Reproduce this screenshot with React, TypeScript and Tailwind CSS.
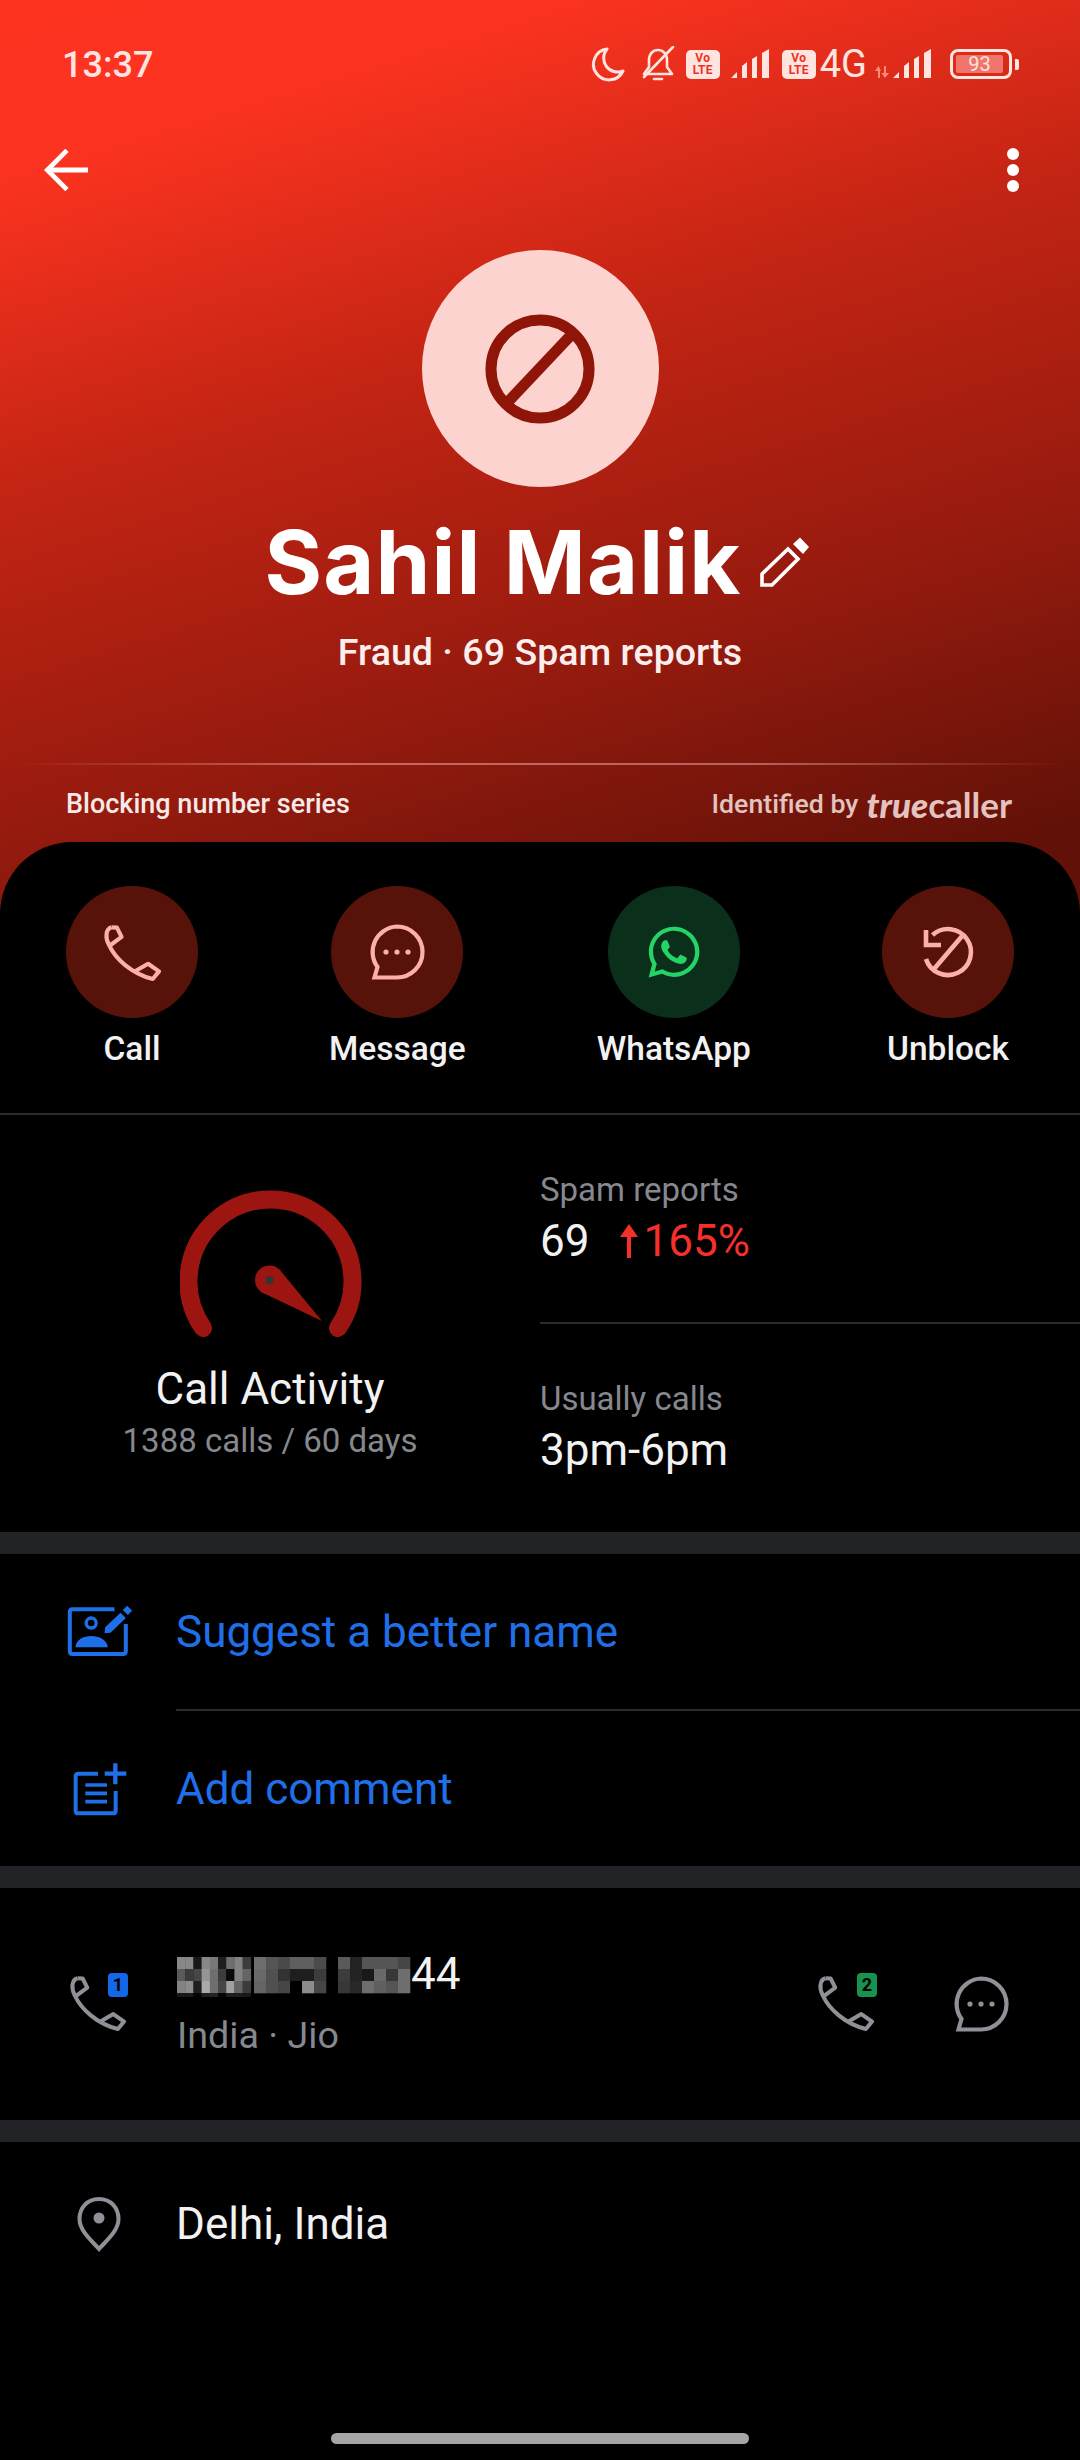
import { FaWhatsapp } from "react-icons/fa";

function PhoneIcon({ className, size = 59 }: { className: string; size?: number }) {
    return (
        <svg viewBox="66 66 178 178" width={size} height={size} fill="none" stroke="currentColor" strokeWidth="12.5" strokeLinejoin="round" className={className}>
            <path d="M92 79L108 80L122 108L88 133" />
            <path d="M92 79C74 84 72 110 84 132C102 172 150 218 216 235L235 212L202 189L160 213" />
        </svg>
    );
}

function ChatIcon({ className, size = 64 }: { className: string; size?: number }) {
    return (
        <svg viewBox="0 0 64 64" width={size} height={size} fill="none" stroke="currentColor" strokeWidth="4.2" className={className}>
            <path d="M32 6.5A25.5 25.5 0 0 1 32 57.5H9.5L12.5 47A25.5 25.5 0 0 1 32 6.5Z" />
            <circle cx="21" cy="32" r="2.6" fill="currentColor" stroke="none" />
            <circle cx="32" cy="32" r="2.6" fill="currentColor" stroke="none" />
            <circle cx="43" cy="32" r="2.6" fill="currentColor" stroke="none" />
        </svg>
    );
}

function UnblockIcon() {
    return (
        <svg viewBox="-30 -30 60 60" width="60" height="60" fill="none" stroke="#fdb0a8" strokeWidth="4.6">
            <path d="M-15.5 -17A23 23 0 1 1 -22 7" />
            <path d="M-22 -22V-7H-7" />
            <path d="M15 -17L-14 17" />
        </svg>
    );
}

function SignalBars() {
    return (
        <svg viewBox="0 0 40 30" width="40" height="30" fill="#ffe4e0">
            <path d="M0 29L6 23V29Z M11 17L16 13V29H11Z M21 10L26 7V29H21Z M31 4L38 0V29H31Z" />
        </svg>
    );
}

function VoLte() {
    return (
        <div className="w-[34px] h-[29px] rounded-[5px] bg-[#ffe4e0] flex flex-col items-center justify-center text-[#f0301f] font-bold text-[12px] leading-[12px] tracking-[0.3px]">
            <span>Vo</span>
            <span>LTE</span>
        </div>
    );
}

const block1 = [
    [136, 136, 24, 136, 120, 30, 110, 130, 60],
    [90, 60, 70, 150, 110, 60, 10, 130, 100],
    [130, 140, 30, 170, 110, 70, 160, 100, 60],
    [24, 24, 5, 30, 35, 5, 30, 30, 24],
];
const block2 = [
    [110, 85, 75, 95, 95, 75],
    [105, 80, 50, 30, 30, 60],
    [100, 80, 70, 0, 140, 70],
];
const block3 = [
    [90, 35, 85, 85, 85, 70],
    [60, 35, 25, 105, 55, 110],
    [55, 40, 110, 95, 85, 110],
];

function Mosaic() {
    const drawBlock = (rows: number[][], x: number, w: number) =>
        rows.flatMap((row, r) =>
            row.map((v, c) => (
                <rect key={`${x}-${r}-${c}`} x={x + c * w} y={r * 12} width={w + 0.3} height={12.3} fill={`rgb(${v},${v},${v})`} />
            ))
        );
    return (
        <svg width="234" height="40" viewBox="0 0 234 40" className="shrink-0 mt-[5px]">
            {drawBlock(block1, 0, 8.2)}
            {drawBlock(block2, 77, 12)}
            {drawBlock(block3, 161, 12)}
        </svg>
    );
}

function ActionButton({ label, bg, children }: { label: string; bg: string; children: React.ReactNode }) {
    return (
        <div className="flex flex-col items-center">
            <div className={`w-[132px] h-[132px] rounded-full flex items-center justify-center ${bg}`}>{children}</div>
            <span className="mt-[13px] text-[33.5px] leading-[36px] font-medium text-[#f2f2f2]">{label}</span>
        </div>
    );
}

export default function App() {
    return (
        <div className="w-[1080px] h-[2460px] bg-black font-['Roboto',sans-serif] overflow-hidden">
            {/* Red header */}
            <div className="h-[930px] bg-[linear-gradient(163deg,#fd3320_0%,#fb3320_14%,#c22413_40%,#931a0e_68%,#611108_92%)] text-white">
                {/* Status bar */}
                <div className="h-[128px] pl-[62px] pr-[61px] pt-[46px] flex justify-between items-start">
                    <span className="text-[36px] leading-[36px] font-medium text-[#ffe4e0] mt-[1px]">13:37</span>
                    <div className="flex items-center h-[36px] text-[#ffe4e0]">
                        <svg viewBox="0 0 34 35" width="34" height="35" fill="none" stroke="currentColor" strokeWidth="3" strokeLinejoin="round">
                            <path d="M16 2A15.5 15.5 0 1 0 32 24A14 14 0 0 1 16 2Z" />
                        </svg>
                        <svg viewBox="0 0 34 36" width="34" height="36" fill="none" stroke="currentColor" strokeWidth="2.6" strokeLinecap="round" strokeLinejoin="round" className="ml-[16px]">
                            <path d="M8 21V14C8 8 12 4 17 4C22 4 26 8 26 14V21L31 28H3Z" />
                            <path d="M32 1L3 31" />
                            <path d="M13 33H21" />
                        </svg>
                        <div className="ml-[11px]"><VoLte /></div>
                        <div className="ml-[11px]"><SignalBars /></div>
                        <div className="ml-[11px]"><VoLte /></div>
                        <span className="ml-[4px] text-[38px] leading-[36px] font-normal">4G</span>
                        <svg viewBox="0 0 14 12" width="14" height="12" fill="#ff8a7c" className="ml-[8px] mt-[16px]">
                            <path d="M3 12V5H0L3.5 0L6 5H5V12Z M9 0V7H6.5L10 12L14 7H11V0Z" />
                        </svg>
                        <div className="ml-[4px]"><SignalBars /></div>
                        <div className="ml-[17px] w-[62px] h-[30px] rounded-[8px] border-[3px] border-[#ffe4e0] p-[3px] flex">
                            <div className="w-[47px] bg-[#f0766b] rounded-[2px] flex items-center justify-center text-[20px] leading-none">93</div>
                        </div>
                        <div className="ml-[3px] w-[4px] h-[11px] rounded-r-[2px] bg-[#ffe4e0]" />
                    </div>
                </div>

                {/* Toolbar */}
                <div className="h-[104px] pt-[20px] pl-[44px] pr-[61px] flex justify-between items-start">
                    <svg viewBox="0 0 46 44" width="44" height="44" fill="none" stroke="white" strokeWidth="5">
                        <path d="M46 22H4" />
                        <path d="M24 1.5L3.5 22L24 42.5" />
                    </svg>
                    <div className="flex flex-col gap-[4px]">
                        <div className="w-[12px] h-[12px] rounded-full bg-white" />
                        <div className="w-[12px] h-[12px] rounded-full bg-white" />
                        <div className="w-[12px] h-[12px] rounded-full bg-white" />
                    </div>
                </div>

                {/* Avatar */}
                <div className="flex justify-center pt-[18px]">
                    <div className="w-[237px] h-[237px] rounded-full bg-[#fcd3ce] flex items-center justify-center">
                        <svg viewBox="0 0 110 110" width="110" height="110" fill="none" stroke="#8e1508" strokeWidth="11" className="blur-[0.5px]">
                            <circle cx="55" cy="55" r="49" />
                            <path d="M88 19L21 90" />
                        </svg>
                    </div>
                </div>

                {/* Name */}
                <div className="mt-[37px] pr-[6px] flex justify-center items-center h-[76px]">
                    <span className="font-['Inter',sans-serif] font-bold text-[88px] leading-[76px] tracking-[1.2px] text-white">Sahil Malik</span>
                    <svg viewBox="0 0 50 50" width="50" height="50" fill="none" stroke="white" strokeWidth="3.6" className="ml-[18px]">
                        <path d="M2 37L28 12L38 22L12 48H2Z" />
                        <path d="M33 7L40 0.5L49 10L43 17Z" fill="white" stroke="none" />
                    </svg>
                </div>
                <div className="mt-[32px] text-center text-[37.6px] leading-[40px] font-medium text-[#fbeeec]">Fraud · 69 Spam reports</div>

                {/* Source line */}
                <div className="mt-[91px] h-[2px] mx-[16px] bg-[linear-gradient(90deg,transparent,#c76a60_30%,#b5655d_70%,transparent)]" />
                <div className="mt-[21px] pl-[66px] pr-[68px] flex justify-between items-center h-[36px]">
                    <span className="text-[27px] leading-[32px] font-medium text-[#f6e9e7]">Blocking number series</span>
                    <span className="flex items-center text-[26.7px] leading-[32px] font-medium text-[#e3c3bf]">
                        Identified by
                        <span className="ml-[8px] font-['Lato',sans-serif] font-black italic text-[35px]">true</span>
                        <span className="font-['Lato',sans-serif] font-bold text-[35px]">caller</span>
                    </span>
                </div>
            </div>

            {/* Sheet */}
            <div className="-mt-[88px] relative bg-black rounded-t-[72px]">
                {/* Actions */}
                <div className="h-[273px] pt-[44px] px-[66px] flex justify-between border-b-2 border-[#2a2b2e]">
                    <ActionButton label="Call" bg="bg-[#57120a]">
                        <PhoneIcon className="text-[#fdb0a8]" />
                    </ActionButton>
                    <ActionButton label="Message" bg="bg-[#57120a]">
                        <ChatIcon className="text-[#fdb0a8]" />
                    </ActionButton>
                    <ActionButton label="WhatsApp" bg="bg-[#0a301c]">
                        <FaWhatsapp size={58} className="text-[#25d366]" />
                    </ActionButton>
                    <ActionButton label="Unblock" bg="bg-[#57120a]">
                        <UnblockIcon />
                    </ActionButton>
                </div>

                {/* Call activity + stats */}
                <div className="h-[417px] flex">
                    <div className="w-[540px] pt-[72px] flex flex-col items-center">
                        <svg viewBox="0 0 182 150" width="182" height="150" fill="none" className="ml-[1px]">
                            <path d="M23 141A82 82 0 1 1 158 141" stroke="#9d1510" strokeWidth="18" strokeLinecap="round" />
                            <circle cx="89.5" cy="93" r="14.5" fill="#9d1510" />
                            <path d="M99 82L142 134L81 105Z" fill="#9d1510" />
                            <circle cx="89.5" cy="93" r="4" fill="#333" />
                        </svg>
                        <span className="mt-[28px] text-[44px] leading-[48px] text-[#f2f2f2]">Call Activity</span>
                        <span className="mt-[10px] text-[33px] leading-[36px] text-[#85888e]">1388 calls / 60 days</span>
                    </div>
                    <div className="flex-1">
                        <div className="h-[209px] pt-[57px] border-b-2 border-[#2a2b2e]">
                            <div className="text-[33px] leading-[36px] text-[#85888e]">Spam reports</div>
                            <div className="mt-[9px] flex items-center text-[44px] leading-[48px] text-[#f2f2f2]">
                                69
                                <svg viewBox="0 0 18 34" width="18" height="34" fill="#f5302a" className="ml-[31px] mr-[5px]">
                                    <path d="M9 0L18 13H11V34H7V13H0Z" />
                                </svg>
                                <span className="text-[#f5302a]">165%</span>
                            </div>
                        </div>
                        <div className="pt-[57px]">
                            <div className="text-[33px] leading-[36px] text-[#85888e]">Usually calls</div>
                            <div className="mt-[9px] text-[44px] leading-[48px] text-[#f2f2f2]">3pm-6pm</div>
                        </div>
                    </div>
                </div>

                <div className="h-[22px] bg-[#222327]" />

                {/* Suggest / comment */}
                <div className="h-[155px] flex items-center">
                    <div className="w-[176px] pl-[66px] shrink-0">
                        <svg viewBox="45 40 200 165" width="67" height="55" fill="none" stroke="#1f6fe8" strokeWidth="12">
                            <path d="M190 56H64Q56 56 56 64V182Q56 190 64 190H216Q224 190 224 182V100" />
                            <circle cx="120" cy="97" r="15" strokeWidth="10" />
                            <path d="M73 170C75 125 165 125 170 170Z" fill="#1f6fe8" stroke="none" />
                            <path d="M160 128L162 110L208 66L224 82L178 126Z M215 58L228 45L243 60L230 73Z" fill="#1f6fe8" stroke="none" />
                        </svg>
                    </div>
                    <span className="text-[44px] leading-[48px] text-[#1f6fe8]">Suggest a better name</span>
                </div>
                <div className="ml-[176px] h-[2px] bg-[#2a2b2e]" />
                <div className="h-[155px] flex items-center">
                    <div className="w-[176px] pl-[73px] shrink-0">
                        <svg viewBox="70 505 165 165" width="55" height="55" fill="none" stroke="#1f6fe8" strokeWidth="12">
                            <path d="M145 543H86Q78 543 78 551V654Q78 662 86 662H190Q198 662 198 654V595" />
                            <path d="M107 577H172M107 602H172M107 627H172" strokeWidth="11" />
                            <path d="M165 543H230M197 512V575" strokeWidth="13" />
                        </svg>
                    </div>
                    <span className="text-[44px] leading-[48px] text-[#1f6fe8]">Add comment</span>
                </div>

                <div className="h-[22px] bg-[#222327]" />

                {/* Number */}
                <div className="h-[232px] flex pl-[69px] pr-[67px]">
                    <div className="relative w-[108px] shrink-0 pt-[86px]">
                        <PhoneIcon className="text-[#8e9197]" size={58} />
                        <div className="absolute left-[39px] top-[85px] w-[20px] h-[24px] rounded-[4px] bg-[#1467e6] text-black text-[18px] leading-[24px] font-bold text-center">1</div>
                    </div>
                    <div className="pt-[64px]">
                        <div className="flex items-start h-[44px]">
                            <Mosaic />
                            <span className="text-[44px] leading-[44px] text-[#f2f2f2]">44</span>
                        </div>
                        <div className="mt-[19px] text-[37.7px] leading-[40px] text-[#85888e]">India · Jio</div>
                    </div>
                    <div className="ml-auto flex items-start pt-[86px]">
                        <div className="relative">
                            <PhoneIcon className="text-[#8e9197]" size={58} />
                            <div className="absolute left-[40px] -top-[1px] w-[20px] h-[24px] rounded-[4px] bg-[#17924f] text-black text-[18px] leading-[24px] font-bold text-center">2</div>
                        </div>
                        <div className="ml-[74px] -mt-[2px]">
                            <ChatIcon className="text-[#8e9197]" />
                        </div>
                    </div>
                </div>

                <div className="h-[22px] bg-[#222327]" />

                {/* Location */}
                <div className="pt-[54px] flex items-center">
                    <div className="w-[176px] pl-[77px] shrink-0">
                        <svg viewBox="0 0 44 56" width="44" height="56" fill="none" stroke="#8e9197" strokeWidth="4">
                            <path d="M22 3C10 3 2.5 12 2.5 23C2.5 35 15 45 22 53C29 45 41.5 35 41.5 23C41.5 12 34 3 22 3Z" />
                            <circle cx="22" cy="22" r="5.5" fill="#8e9197" stroke="none" />
                        </svg>
                    </div>
                    <span className="text-[44px] leading-[48px] text-[#f2f2f2]">Delhi, India</span>
                </div>

                {/* Home bar */}
                <div className="mt-[181px] mx-auto w-[418px] h-[11px] rounded-full bg-[#a5a5a5]" />
            </div>
        </div>
    );
}
